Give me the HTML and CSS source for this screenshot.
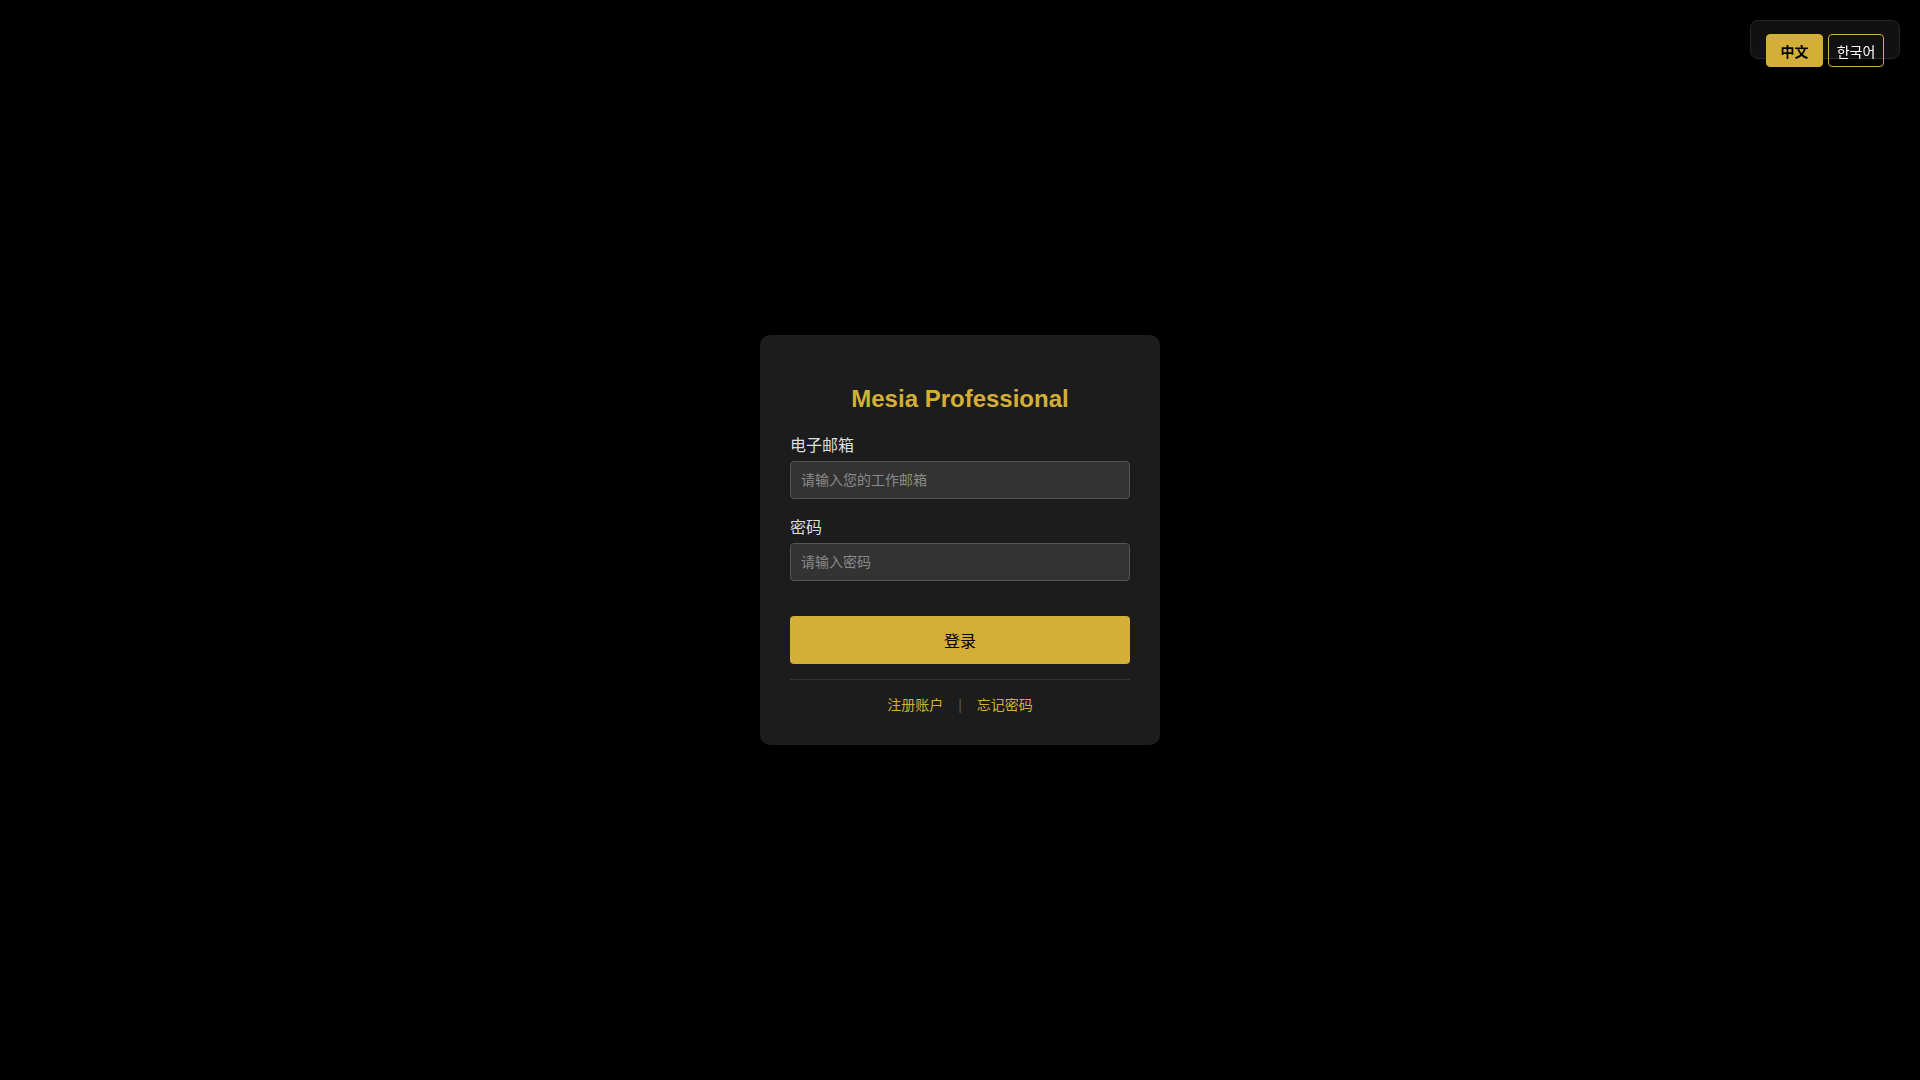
FILE: index.html
```html
<!DOCTYPE html>
<html lang="zh">
<head>
<meta charset="utf-8">
<title>Mesia Professional</title>
<link rel="stylesheet" href="styles.css">
</head>
<body>
<div class="lang-switch">
  <button class="lang-btn active">中文</button>
  <button class="lang-btn">한국어</button>
</div>
<main class="page">
  <div class="card">
    <h2 class="title">Mesia Professional</h2>
    <form class="form">
      <div class="group">
        <label class="label">电子邮箱</label>
        <input class="input" type="email" placeholder="请输入您的工作邮箱">
      </div>
      <div class="group">
        <label class="label">密码</label>
        <input class="input" type="password" placeholder="请输入密码">
      </div>
      <button class="submit" type="button">登录</button>
    </form>
    <div class="footer"><a class="link" href="#">注册账户</a><span class="sep">|</span><a class="link" href="#">忘记密码</a></div>
  </div>
</main>
</body>
</html>
```
FILE: styles.css
```css
* { box-sizing: border-box; }
html, body { margin: 0; padding: 0; }
body {
  background: #000;
  color: #fff;
  font-family: "Liberation Sans", "Noto Sans CJK SC", "Noto Sans CJK KR", sans-serif;
  height: 100vh;
}
.page {
  height: 100vh;
  display: flex;
  align-items: center;
  justify-content: center;
}
.card {
  width: 400px;
  background: #1c1c1c;
  border-radius: 10px;
  padding: 30px;
}
.title {
  margin: 20px 0 20px;
  font-size: 24px;
  font-weight: bold;
  line-height: 27px;
  color: #d4af37;
  text-align: center;
}
.form { display: block; }
.group { margin-bottom: 15px; }
.label {
  display: block;
  font-size: 16px;
  font-weight: normal;
  line-height: 24px;
  color: #dedede;
  padding-top: 2px;
  margin-bottom: 3px;
}
.input {
  display: block;
  width: 100%;
  height: 38px;
  padding: 0 10px;
  font-family: inherit;
  font-size: 14px;
  color: #fff;
  background: #333;
  border: 1px solid #555;
  border-radius: 4px;
  outline: none;
}
.input::placeholder { color: #8a8a8a; }
.submit {
  display: block;
  width: 100%;
  height: 48px;
  margin-top: 35px;
  border: none;
  border-radius: 4px;
  background: #d4af37;
  color: #000;
  font-family: inherit;
  font-size: 16px;
}
.footer {
  margin-top: 15px;
  padding-top: 15px;
  border-top: 1px solid #333;
  text-align: center;
  font-size: 14px;
  line-height: 20px;
}
.link { color: #d4af37; text-decoration: none; }
.sep { color: #555; margin: 0 15px; }
.lang-switch {
  position: fixed;
  top: 20px;
  right: 20px;
  width: 150px;
  height: 39px;
  padding: 13px 15px 0;
  background: #111;
  border: 1px solid #2a2720;
  border-radius: 8px;
  display: flex;
  gap: 5px;
  align-items: flex-start;
}
.lang-btn {
  height: 33px;
  width: 56px;
  padding: 0;
  flex: none;
  font-family: "Liberation Sans", "Noto Sans CJK SC", "Noto Sans CJK KR", sans-serif;
  font-size: 14px;
  color: #fff;
  background: transparent;
  border: 1px solid #d4af37;
  border-radius: 4px;
  text-align: center;
}
.lang-btn.active {
  width: 57px;
  background: #d4af37;
  color: #000;
  font-weight: bold;
}
```
